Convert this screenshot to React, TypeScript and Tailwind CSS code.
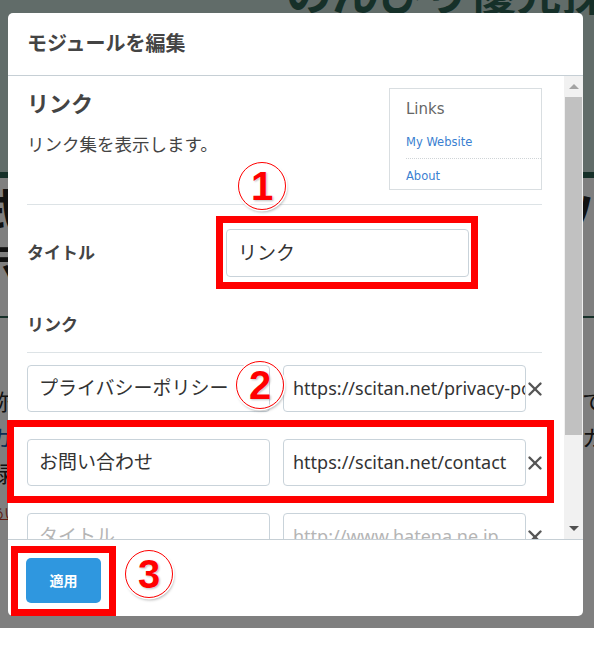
import { X } from "lucide-react";

const links = [
  { title: "プライバシーポリシー", url: "https://scitan.net/privacy-policy" },
  { title: "お問い合わせ", url: "https://scitan.net/contact" },
  { title: "", url: "" },
];

const Marker = ({ n, className }: { n: string; className: string }) => (
  <div
    className={`absolute flex h-[48px] w-[48px] items-center justify-center rounded-full border-[1.5px] border-[#ff0000] shadow-[0_0_0_1.5px_#fff,inset_0_0_0_1px_#fff,1px_2px_3px_rgba(0,0,0,0.35)] ${className}`}
  >
    <span className="font-['Liberation_Sans',sans-serif] text-[40px] font-bold leading-none text-[#ff0000] [text-shadow:0_0_2px_#fff,1px_1px_2px_rgba(0,0,0,0.3)]">
      {n}
    </span>
  </div>
);

const App = () => {
  return (
    <div className="relative h-[647px] w-[594px] overflow-hidden bg-white font-['Noto_Sans','Noto_Sans_CJK_JP',sans-serif] text-[#444]">
      {/* page behind the dialog */}
      <div className="h-[628px] overflow-hidden bg-white">
        <div className="h-[203px] bg-[#c3d8d2]">
          <p className="-mt-[31px] whitespace-nowrap pl-[286px] text-[46px] font-bold leading-none text-[#2c6152]">
            のんびり優先探索
          </p>
        </div>
        <div className="h-[6px] bg-[#2c6152]" />
        <div className="-mx-[22px] mt-[4px] flex justify-between text-[46px] font-bold leading-[56px] text-[#222]">
          <span>式</span>
          <span>ハ</span>
        </div>
        <div className="-ml-[24px] text-[40px] font-bold leading-[52px] text-[#222]">示</div>
        <div className="mt-[26px] h-[2px] bg-[#2c6152]" />
        <div className="-mx-[10px] mt-[70px] flex flex-col gap-[10px] text-[22px] leading-[26px] text-[#222]">
          <div className="flex justify-between">
            <span>称</span>
            <span>て</span>
          </div>
          <div className="flex justify-between">
            <span className="text-[#1b5fa8]">カ</span>
            <span>カ</span>
          </div>
          <span>録</span>
          <span className="mt-[4px] text-[14px] text-[#c0392b] underline">あいう</span>
        </div>
      </div>
      <div className="absolute inset-x-0 top-0 h-[628px] bg-black/50" />

      {/* dialog */}
      <div className="absolute left-[8px] top-[13px] flex h-[603px] w-[575px] flex-col overflow-hidden rounded-[5px] bg-white">
        <div className="flex h-[63px] shrink-0 items-center border-b border-[#c6cfd5] px-[19px] text-[20px] font-bold text-[#444]">
          モジュールを編集
        </div>

        <div className="flex h-[463px] shrink-0">
          <div className="flex-1 overflow-hidden pl-[19px] pr-[22px]">
            <div className="flex items-start justify-between pt-[12px]">
              <div>
                <h2 className="text-[22px] font-bold leading-[30px] text-[#444]">リンク</h2>
                <p className="mt-[14px] text-[17.5px] leading-[24px] text-[#444]">リンク集を表示します。</p>
              </div>
              <div className="h-[102px] w-[153px] border border-[#d9dee1] pl-[16px] font-['DejaVu_Sans',sans-serif]">
                <p className="mt-[10px] text-[15px] leading-[20px] text-[#666]">Links</p>
                <p className="mt-[15px] text-[11.5px] leading-[16px] text-[#3b7fd1]">My Website</p>
                <div className="mt-[8px] border-t border-dotted border-[#cfd4d7]" />
                <p className="mt-[9px] text-[11.5px] leading-[16px] text-[#3b7fd1]">About</p>
              </div>
            </div>

            <div className="mt-[14px] border-t border-[#dde3e6]" />

            <div className="mt-[24px] flex items-center">
              <span className="w-[199px] text-[17px] font-bold text-[#444]">タイトル</span>
              <div className="flex h-[48px] w-[243px] items-center rounded-[4px] border border-[#c9d3da] px-[11px] text-[19px] text-[#333]">
                リンク
              </div>
            </div>

            <p className="mt-[36px] text-[17px] font-bold leading-[24px] text-[#444]">リンク</p>
            <div className="mt-[15px] border-t border-[#dde3e6]" />

            <div className="mt-[12px] flex flex-col gap-[27px]">
              {links.map((link, i) => (
                <div key={i} className="flex items-center">
                  <div className="flex h-[47px] w-[243px] shrink-0 items-center overflow-hidden whitespace-nowrap rounded-[4px] border border-[#c9d3da] px-[11px] text-[19px] text-[#333]">
                    {link.title || <span className="text-[#b5b5b5]">タイトル</span>}
                  </div>
                  <div className="ml-[13px] flex h-[47px] w-[243px] shrink-0 items-center overflow-hidden whitespace-nowrap rounded-[4px] border border-[#c9d3da] px-[9px] text-[18px] text-[#333]">
                    {link.url || <span className="text-[#b5b5b5]">http://www.hatena.ne.jp</span>}
                  </div>
                  <X className="-ml-[2px] h-[22px] w-[22px] shrink-0 text-[#555]" strokeWidth={2.6} />
                </div>
              ))}
            </div>
          </div>

          {/* scrollbar */}
          <div className="flex w-[19px] shrink-0 flex-col bg-[#f1f1f1]">
            <div className="flex h-[21px] items-center justify-center">
              <div className="h-0 w-0 border-x-[5px] border-b-[5px] border-x-transparent border-b-[#a3a3a3]" />
            </div>
            <div className="mx-[1px] h-[338px] bg-[#c1c1c1]" />
            <div className="flex-1" />
            <div className="flex h-[21px] items-center justify-center">
              <div className="h-0 w-0 border-x-[5px] border-t-[5px] border-x-transparent border-t-[#505050]" />
            </div>
          </div>
        </div>

        <div className="flex flex-1 items-start border-t border-[#c6cfd5] pl-[18px] pt-[18px]">
          <button className="h-[45px] w-[75px] rounded-[5px] bg-[#2f97df] text-[14px] font-bold text-white">
            適用
          </button>
        </div>
      </div>

      {/* annotations */}
      <div className="absolute left-[216px] top-[216px] h-[73px] w-[262px] border-[7px] border-[#ff0000]" />
      <div className="absolute left-[7px] top-[420px] h-[83px] w-[547px] border-[7px] border-[#ff0000]" />
      <div className="absolute left-[11px] top-[546px] h-[70px] w-[105px] border-[7px] border-[#ff0000]" />
      <Marker n="1" className="left-[238px] top-[162px]" />
      <Marker n="2" className="left-[236px] top-[361px]" />
      <Marker n="3" className="left-[125px] top-[550px]" />
    </div>
  );
};

export default App;
